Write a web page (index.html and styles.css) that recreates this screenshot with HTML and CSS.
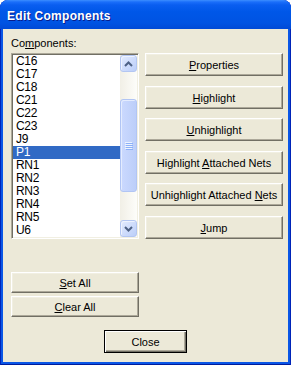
FILE: index.html
```html
<!DOCTYPE html>
<html lang="en">
<head>
  <meta charset="UTF-8" />
  <title>Edit Components</title>
  <link rel="stylesheet" href="styles.css">
</head>
<body>
  <div class="window">
    <div class="titlebar">
      <span class="title">Edit Components</span>
    </div>

    <div class="client">
      <div class="main">
        <div class="left">
          <div class="label">Co<u>m</u>ponents:</div>
          <div class="listbox">
            <ul class="items">
              <li>C16</li>
              <li>C17</li>
              <li>C18</li>
              <li>C21</li>
              <li>C22</li>
              <li>C23</li>
              <li>J9</li>
              <li class="selected">P1</li>
              <li>RN1</li>
              <li>RN2</li>
              <li>RN3</li>
              <li>RN4</li>
              <li>RN5</li>
              <li>U6</li>
            </ul>
            <div class="scrollbar">
              <div class="sb-btn">
                <svg width="9" height="6" viewBox="0 0 9 6"><path d="M1 5 L4.5 1.5 L8 5" fill="none" stroke="#4D6185" stroke-width="2"/></svg>
              </div>
              <div class="sb-track upper"></div>
              <div class="sb-thumb">
                <svg width="8" height="8" viewBox="0 0 8 8">
                  <rect x="0" y="0" width="7" height="1" fill="#EEF4FE"/>
                  <rect x="1" y="1" width="7" height="1" fill="#8CB0F8"/>
                  <rect x="0" y="2" width="7" height="1" fill="#EEF4FE"/>
                  <rect x="1" y="3" width="7" height="1" fill="#8CB0F8"/>
                  <rect x="0" y="4" width="7" height="1" fill="#EEF4FE"/>
                  <rect x="1" y="5" width="7" height="1" fill="#8CB0F8"/>
                  <rect x="0" y="6" width="7" height="1" fill="#EEF4FE"/>
                  <rect x="1" y="7" width="7" height="1" fill="#8CB0F8"/>
                </svg>
              </div>
              <div class="sb-track lower"></div>
              <div class="sb-btn">
                <svg width="9" height="6" viewBox="0 0 9 6"><path d="M1 1 L4.5 4.5 L8 1" fill="none" stroke="#4D6185" stroke-width="2"/></svg>
              </div>
            </div>
          </div>

          <div class="set-buttons">
            <button class="btn short"><u>S</u>et All</button>
            <button class="btn short"><u>C</u>lear All</button>
          </div>
        </div>

        <div class="right">
          <button class="btn"><u>P</u>roperties</button>
          <button class="btn"><u>H</u>ighlight</button>
          <button class="btn"><u>U</u>nhighlight</button>
          <button class="btn">Highlight <u>A</u>ttached Nets</button>
          <button class="btn">Unhighlight Attached <u>N</u>ets</button>
          <button class="btn"><u>J</u>ump</button>
        </div>
      </div>

      <div class="footer">
        <button class="btn default">Close</button>
      </div>
    </div>
  </div>
</body>
</html>
```

FILE: styles.css
```css
body {
  margin: 0;
  padding: 0;
  background: #fff;
  font-family: 'Liberation Sans', Arial, sans-serif;
  font-size: 11px;
}

.window {
  width: 291px;
  height: 365px;
  display: flex;
  flex-direction: column;
  background: #0A56E6;
  border-radius: 8px 8px 0 0;
  box-shadow: inset 1px 0 #0024B8, inset -1px 0 #0024B8, inset 0 -1px #001C9C;
  overflow: hidden;
}

.titlebar {
  flex: none;
  height: 29px;
  box-sizing: border-box;
  padding: 8px 0 0 7px;
  background: linear-gradient(to bottom, #3C8EFF 0, #1A6EFA 2px, #0A5EF0 5px, #0057E8 40%, #0053E2 80%, #004AD6 100%);
}

.title {
  display: block;
  color: #fff;
  font-weight: bold;
  font-size: 12px;
  line-height: 16px;
  letter-spacing: 0.3px;
  text-shadow: 1px 1px #0A1C8A;
}

.client {
  flex: 1;
  margin: 0 3px 3px;
  padding: 8px 5px 0 8px;
  background: #ECE9D8;
}

.main {
  display: flex;
  gap: 6px;
}

.left {
  width: 128px;
}

.label {
  line-height: 13px;
  height: 13px;
  margin-bottom: 3px;
  color: #000;
}

.listbox {
  display: flex;
  height: 186px;
  box-sizing: border-box;
  padding: 1px;
  background: #fff;
  border: 1px solid;
  border-color: #ACA899 #fff #fff #ACA899;
  box-shadow: inset 1px 1px #716F64, inset -1px -1px #F1EFE2;
}

.items {
  flex: 1;
  margin: 0;
  padding: 0;
  list-style: none;
}

.items li {
  height: 13px;
  line-height: 13px;
  padding-left: 3px;
  font-size: 12px;
  letter-spacing: -0.3px;
  color: #000;
}

.items li.selected {
  background: #316AC5;
  color: #fff;
}

.scrollbar {
  width: 17px;
  display: flex;
  flex-direction: column;
  background: linear-gradient(to right, #F1EFE6, #FDFDFA);
}

.sb-btn {
  flex: none;
  height: 17px;
  box-sizing: border-box;
  margin: 0;
  border: 1px solid #B3C6F2;
  border-radius: 3px;
  box-shadow: inset 1px 1px #EEF3FE;
  background: linear-gradient(to bottom right, #E3EBFE, #BBCEF9);
  display: flex;
  align-items: center;
  justify-content: center;
}

.sb-track.upper {
  height: 27px;
}

.sb-track.lower {
  flex: 1;
}

.sb-thumb {
  height: 93px;
  box-sizing: border-box;
  border: 1px solid #B1C5F4;
  border-radius: 3px;
  box-shadow: inset 1px 1px #E4ECFE;
  background: linear-gradient(to right, #CBD9FE, #BCCEF9);
  display: flex;
  align-items: center;
  justify-content: center;
}

.btn {
  display: block;
  width: 138px;
  height: 23px;
  padding: 0;
  box-sizing: border-box;
  font-family: 'Liberation Sans', Arial, sans-serif;
  font-size: 11px;
  color: #000;
  background: #ECE9D8;
  border: 1px solid;
  border-color: #fff #716F64 #716F64 #fff;
  box-shadow: inset -1px -1px #ACA899, inset 1px 1px #F1EFE2;
  border-radius: 0;
}

.right {
  display: flex;
  flex-direction: column;
  gap: 9px;
  padding-top: 16px;
}

.right .btn:nth-child(even) {
  margin-top: 1px;
}

.set-buttons {
  display: flex;
  flex-direction: column;
  gap: 3px;
  margin-top: 33px;
}

.btn.short {
  width: 128px;
  height: 21px;
}

.footer {
  display: flex;
  justify-content: center;
  margin-right: 3px;
  padding-top: 13px;
}

.btn.default {
  width: 83px;
  border: 1px solid #000;
  box-shadow: inset 1px 1px #fff, inset -1px -1px #716F64, inset -2px -2px #ACA899;
}
```
